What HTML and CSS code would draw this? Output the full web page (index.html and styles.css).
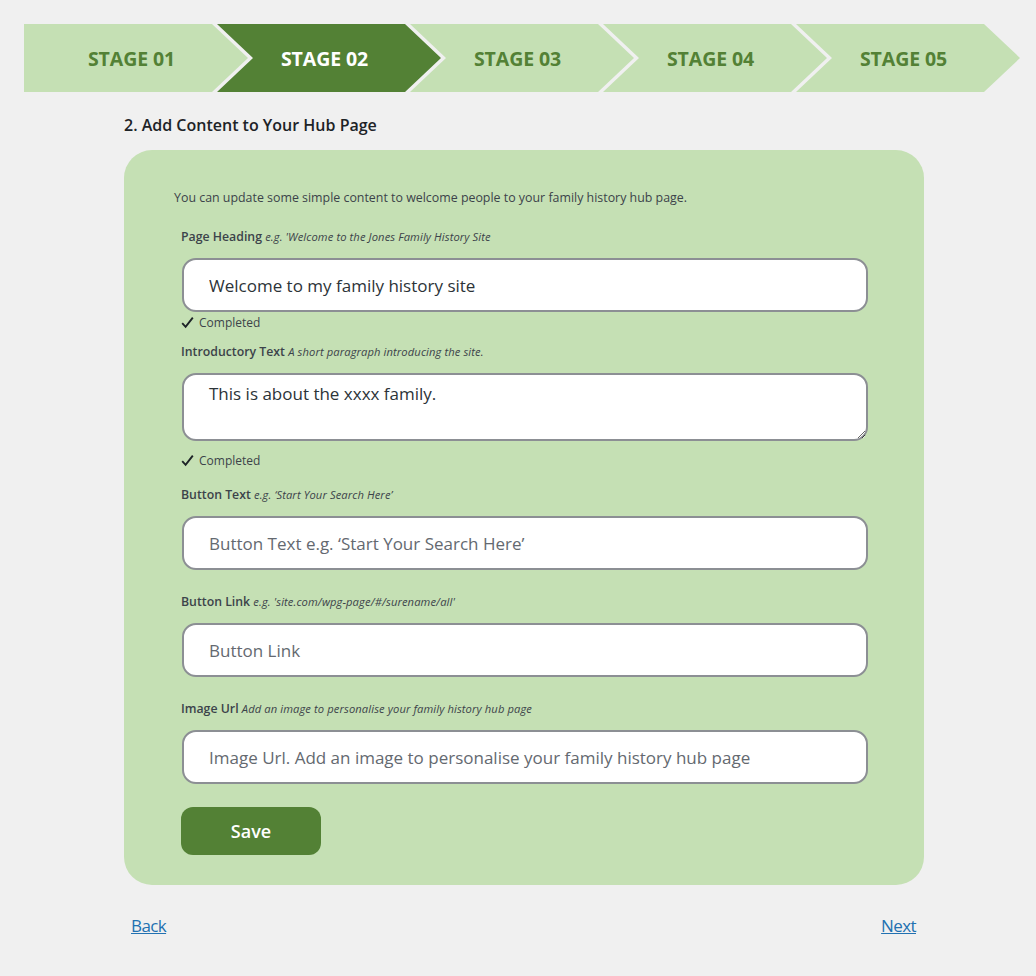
FILE: index.html
```html
<!DOCTYPE html>
<html lang="en">
<head>
<meta charset="utf-8">
<title>Add Content to Your Hub Page</title>
<link rel="stylesheet" href="styles.css">
</head>
<body>
<nav class="stages">
  <div class="stage first">STAGE 01</div>
  <div class="stage active">STAGE 02</div>
  <div class="stage">STAGE 03</div>
  <div class="stage">STAGE 04</div>
  <div class="stage">STAGE 05</div>
</nav>
<main class="main">
  <h2 class="title">2. Add Content to Your Hub Page</h2>
  <section class="card">
    <p class="intro">You can update some simple content to welcome people to your family history hub page.</p>
    <div class="form">
      <div class="field done">
        <label class="label">Page Heading <em>e.g. 'Welcome to the Jones Family History Site</em></label>
        <input class="input" type="text" value="Welcome to my family history site">
        <div class="status">
          <svg class="check" width="13" height="13" viewBox="0 0 13 13"><path d="M1.2 7.2 L4.6 10.8 L11.8 1.6" fill="none" stroke="#1d2327" stroke-width="1.9"/></svg>
          <span>Completed</span>
        </div>
      </div>
      <div class="field done2">
        <label class="label">Introductory Text <em>A short paragraph introducing the site.</em></label>
        <textarea class="input area">This is about the xxxx family.</textarea>
        <div class="status s2">
          <svg class="check" width="13" height="13" viewBox="0 0 13 13"><path d="M1.2 7.2 L4.6 10.8 L11.8 1.6" fill="none" stroke="#1d2327" stroke-width="1.9"/></svg>
          <span>Completed</span>
        </div>
      </div>
      <div class="field">
        <label class="label">Button Text <em>e.g. ‘Start Your Search Here’</em></label>
        <input class="input" type="text" placeholder="Button Text e.g. ‘Start Your Search Here’">
      </div>
      <div class="field">
        <label class="label">Button Link <em>e.g. 'site.com/wpg-page/#/surename/all'</em></label>
        <input class="input" type="text" placeholder="Button Link">
      </div>
      <div class="field">
        <label class="label">Image Url <em>Add an image to personalise your family history hub page</em></label>
        <input class="input" type="text" placeholder="Image Url. Add an image to personalise your family history hub page">
      </div>
      <button class="save" type="button">Save</button>
    </div>
  </section>
  <div class="pager">
    <a href="#" class="link">Back</a>
    <a href="#" class="link">Next</a>
  </div>
</main>
</body>
</html>
```
FILE: styles.css
```css
* { box-sizing: border-box; }
html, body { margin: 0; padding: 0; }
body {
  background: #f0f0f0;
  font-family: "Open Sans", "Noto Sans", sans-serif;
  color: #3c434a;
  width: 1036px;
  min-height: 976px;
  padding-top: 24px;
}
.stages {
  display: flex;
  height: 68px;
  margin-left: 24px;
}
.stage {
  flex: 0 0 224px;
  height: 68px;
  margin-left: -31px;
  background: #c5e0b4;
  color: #538135;
  font-weight: 700;
  font-size: 19.5px;
  display: flex;
  align-items: center;
  justify-content: center;
  padding-right: 9px;
  padding-top: 1px;
  letter-spacing: -0.1px;
  clip-path: polygon(0 0, 188px 0, 224px 50%, 188px 100%, 0 100%, 36px 50%);
}
.stage.first {
  margin-left: 0;
  clip-path: polygon(0 0, 188px 0, 224px 50%, 188px 100%, 0 100%);
}
.stage.active {
  background: #538135;
  color: #ffffff;
}
.main {
  width: 800px;
  margin-left: 124px;
}
.title {
  margin: 22px 0 0;
  font-size: 16px;
  line-height: 22px;
  font-weight: 600;
  color: #1d2327;
}
.card {
  margin-top: 14px;
  background: #c5e0b4;
  border-radius: 28px;
  padding: 39px 57px 30px 50px;
}
.intro {
  margin: 0 0 21px;
  font-size: 12.4px;
  line-height: 18px;
  color: #3c434a;
}
.form { padding-left: 7px; }
.field { margin-bottom: 23px; }
.field.done { margin-bottom: 12px; }
.field.done2 { margin-bottom: 17px; }
.label {
  display: block;
  font-size: 12.3px;
  line-height: 18px;
  height: 18px;
  font-weight: 600;
  color: #3c434a;
  margin-bottom: 12px;
}
.label em {
  font-weight: 400;
  font-size: 11.2px;
  font-style: italic;
  letter-spacing: 0.1px;
}
.input {
  display: block;
  width: 686px;
  height: 54px;
  margin-left: 1px;
  border: 2px solid #8c8f94;
  border-radius: 14px;
  background: #fff;
  padding: 0 25px;
  font-family: inherit;
  font-size: 17px;
  color: #2c3338;
  outline: none;
}
.input::placeholder { color: #646970; opacity: 1; }
.area {
  height: 68px;
  padding-top: 7px;
  resize: vertical;
  line-height: 24px;
}
.status {
  display: flex;
  align-items: center;
  gap: 5px;
  margin-top: 1px;
  height: 18px;
  font-size: 12px;
  color: #3c434a;
}
.status.s2 { margin-top: 10px; }
.check { flex: none; }
.save {
  display: block;
  width: 140px;
  height: 48px;
  border: 0;
  border-radius: 12px;
  background: #538135;
  color: #fff;
  font-family: inherit;
  font-size: 18px;
  font-weight: 600;
}
.pager {
  display: flex;
  justify-content: space-between;
  padding: 30px 8px 0 7px;
}
.link {
  font-size: 17px;
  line-height: 22px;
  color: #2271b1;
  text-decoration: underline;
  letter-spacing: -0.6px;
}
```
